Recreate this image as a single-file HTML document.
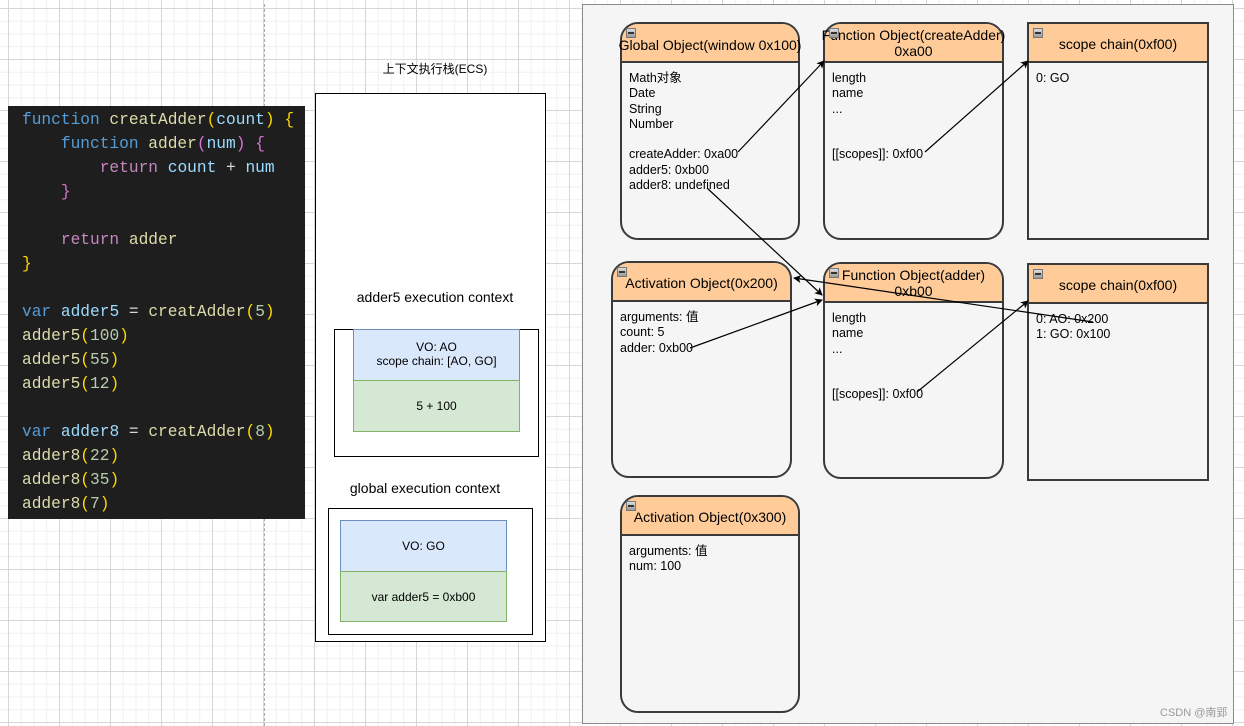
<!DOCTYPE html>
<html><head><meta charset="utf-8"><style>
*{margin:0;padding:0;box-sizing:border-box}
body{width:1244px;height:726px;overflow:hidden;position:relative;font-family:"Liberation Sans","Noto Sans CJK SC",sans-serif;font-size:12px;color:#000;
background-color:#fff;
background-image:linear-gradient(#d6d6d6 1px,transparent 1px),linear-gradient(90deg,#d6d6d6 1px,transparent 1px),linear-gradient(#efefef 1px,transparent 1px),linear-gradient(90deg,#efefef 1px,transparent 1px);
background-size:51px 51px,51px 51px,12.75px 12.75px,12.75px 12.75px;background-position:8px 8px,8px 8px,8px 8px,8px 8px}
.a{position:absolute}
.code{left:8px;top:106px;width:297px;height:413px;background:#1e1e1e;font-family:"Liberation Mono",monospace;font-size:16.2px;line-height:24px;padding:2px 0 0 14px;white-space:pre;color:#dcdcaa}
.k{color:#569cd6}.r{color:#c586c0}.v{color:#9cdcfe}.y{color:#ffd700}.p{color:#da70d6}.n{color:#b5cea8}.w{color:#d4d4d4}
.panel{left:582px;top:4px;width:652px;height:720px;background:#f5f5f5;border:1px solid #8a8a8a}
.box{position:absolute;border:2px solid #3a3a3a;border-radius:18px;background:#f5f5f5}
.sq{border-radius:0}
.hd{background:#ffcc99;border-bottom:2px solid #3a3a3a;border-radius:16px 16px 0 0;text-align:center;font-size:14px;line-height:16px;position:relative;white-space:nowrap}
.sq .hd{border-radius:0}
.hd span.t{position:relative;display:block;margin:0 -20px}
.bd{padding:8px 0 0 7px;font-size:12.5px;line-height:15.3px}
.mn{position:absolute;left:4px;top:4px;width:10px;height:10px;background:linear-gradient(#ddd,#999);border:1px solid #777;z-index:2}
.mn:after{content:"";position:absolute;left:1px;right:1px;top:3px;height:2px;background:#333}
.c{text-align:center}
</style></head><body>
<div class="a" style="left:264px;top:4px;height:722px;border-left:1px dashed #aaa"></div>
<div class="a code"><span class="k">function</span> creatAdder<span class="y">(</span><span class="v">count</span><span class="y">)</span> <span class="y">{</span>
    <span class="k">function</span> adder<span class="p">(</span><span class="v">num</span><span class="p">)</span> <span class="p">{</span>
        <span class="r">return</span> <span class="v">count</span> <span class="w">+</span> <span class="v">num</span>
    <span class="p">}</span>

    <span class="r">return</span> adder
<span class="y">}</span>

<span class="k">var</span> <span class="v">adder5</span> <span class="w">=</span> creatAdder<span class="y">(</span><span class="n">5</span><span class="y">)</span>
adder5<span class="y">(</span><span class="n">100</span><span class="y">)</span>
adder5<span class="y">(</span><span class="n">55</span><span class="y">)</span>
adder5<span class="y">(</span><span class="n">12</span><span class="y">)</span>

<span class="k">var</span> <span class="v">adder8</span> <span class="w">=</span> creatAdder<span class="y">(</span><span class="n">8</span><span class="y">)</span>
adder8<span class="y">(</span><span class="n">22</span><span class="y">)</span>
adder8<span class="y">(</span><span class="n">35</span><span class="y">)</span>
adder8<span class="y">(</span><span class="n">7</span><span class="y">)</span></div>

<div class="a c" style="left:335px;top:60px;width:200px;font-size:12px">上下文执行栈(ECS)</div>
<div class="a" style="left:315px;top:93px;width:231px;height:549px;border:1px solid #000;background:#fff"></div>
<div class="a c" style="left:320px;top:289px;width:230px;font-size:14px">adder5 execution context</div>
<div class="a" style="left:334px;top:329px;width:205px;height:128px;border:1px solid #000;background:#fff"></div>
<div class="a c" style="left:353px;top:329px;width:167px;height:52px;background:#dae8fc;border:1px solid #6c8ebf;padding-top:10px;line-height:14px">VO: AO<br>scope chain: [AO, GO]</div>
<div class="a c" style="left:353px;top:380px;width:167px;height:52px;background:#d5e8d4;border:1px solid #82b366;padding-top:18px">5 + 100</div>
<div class="a c" style="left:310px;top:480px;width:230px;font-size:14px">global execution context</div>
<div class="a" style="left:328px;top:508px;width:205px;height:127px;border:1px solid #000;background:#fff"></div>
<div class="a c" style="left:340px;top:520px;width:167px;height:52px;background:#dae8fc;border:1px solid #6c8ebf;padding-top:18px">VO: GO</div>
<div class="a c" style="left:340px;top:571px;width:167px;height:51px;background:#d5e8d4;border:1px solid #82b366;padding-top:18px">var adder5 = 0xb00</div>

<div class="a panel"></div>

<div class="box" style="left:620px;top:22px;width:180px;height:218px"><div class="hd" style="height:39px;padding-top:13px"><span class="mn"></span><span class="t">Global Object(window 0x100)</span></div>
<div class="bd">Math对象<br>Date<br>String<br>Number<br><br>createAdder: 0xa00<br>adder5: 0xb00<br>adder8: undefined</div></div>

<div class="box" style="left:823px;top:22px;width:181px;height:218px"><div class="hd" style="height:39px;padding-top:3px"><span class="mn"></span><span class="t">Function Object(createAdder)<br>0xa00</span></div>
<div class="bd">length<br>name<br>...<br><br><br>[[scopes]]: 0xf00</div></div>

<div class="box sq" style="left:1027px;top:22px;width:182px;height:218px"><div class="hd" style="height:39px;padding-top:12px"><span class="mn"></span>scope chain(0xf00)</div>
<div class="bd">0: GO</div></div>

<div class="box" style="left:611px;top:261px;width:181px;height:217px"><div class="hd" style="height:39px;padding-top:12px"><span class="mn"></span><span class="t">Activation Object(0x200)</span></div>
<div class="bd">arguments: 值<br>count: 5<br>adder: 0xb00</div></div>

<div class="box" style="left:823px;top:262px;width:181px;height:217px"><div class="hd" style="height:39px;padding-top:3px"><span class="mn"></span><span class="t">Function Object(adder)<br>0xb00</span></div>
<div class="bd">length<br>name<br>...<br><br><br>[[scopes]]: 0xf00</div></div>

<div class="box sq" style="left:1027px;top:263px;width:182px;height:218px"><div class="hd" style="height:39px;padding-top:12px"><span class="mn"></span>scope chain(0xf00)</div>
<div class="bd">0: AO: 0x200<br>1: GO: 0x100</div></div>

<div class="box" style="left:620px;top:495px;width:180px;height:218px"><div class="hd" style="height:39px;padding-top:12px"><span class="mn"></span><span class="t">Activation Object(0x300)</span></div>
<div class="bd">arguments: 值<br>num: 100</div></div>

<svg class="a" style="left:0;top:0" width="1244" height="726">
<defs><marker id="m" markerWidth="8" markerHeight="8" refX="7" refY="4" orient="auto" markerUnits="userSpaceOnUse"><path d="M0,0 L8,4 L0,8 L2,4Z" fill="#000"/></marker></defs>
<g stroke="#000" stroke-width="1.2" fill="none" marker-end="url(#m)">
<line x1="738" y1="152" x2="824" y2="61"/>
<line x1="925" y1="152" x2="1028" y2="61"/>
<line x1="707" y1="188" x2="822" y2="295"/>
<line x1="690" y1="348" x2="822" y2="300"/>
<line x1="1093" y1="322" x2="794" y2="278"/>
<line x1="917" y1="392" x2="1028" y2="301"/>
</g></svg>
<div class="a" style="left:1160px;top:704px;font-size:11px;color:#999">CSDN @南郢</div>
</body></html>
